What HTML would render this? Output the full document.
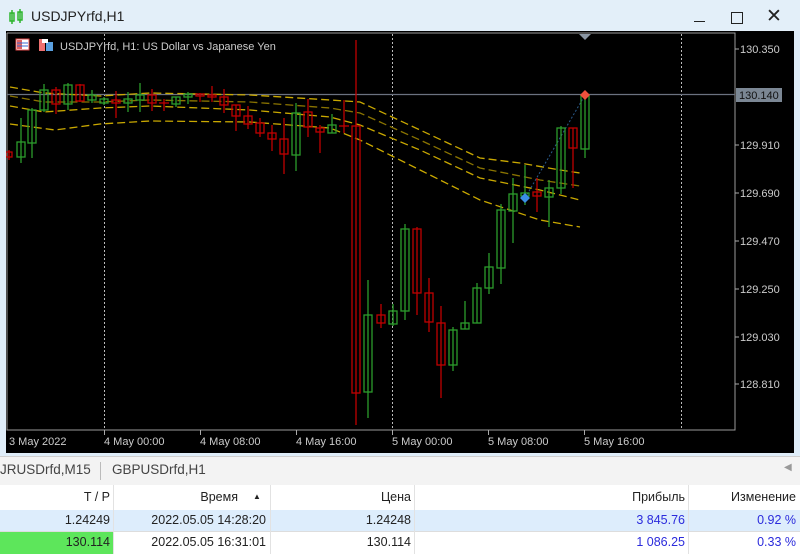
<!DOCTYPE html>
<html><head><meta charset="utf-8"><style>
body{margin:0;width:800px;height:554px;overflow:hidden;background:#dfedf9;font-family:"Liberation Sans",sans-serif;position:relative}
.t{position:absolute;white-space:nowrap}
#tb{position:absolute;left:0;top:0;width:800px;height:31px;background:#e3eff9}
#tabs{position:absolute;left:0;top:456px;width:800px;height:28px;background:#f3f3f3;border-top:1px solid #d0d0d0;border-bottom:1px solid #d6d6d6}
#tbl{position:absolute;left:0;top:485px;width:800px;height:69px;background:#fff}
.c{position:absolute;font-size:12.5px;color:#222;text-align:right;height:21px;line-height:21px}
.v{position:absolute;width:1px;background:#e2e2e2}
</style></head><body>
<div id="tb"></div>
<svg class="t" style="left:9px;top:9px" width="14" height="16"><rect x="1" y="4" width="4" height="8" fill="none" stroke="#2db52d" stroke-width="1.5"/><line x1="3" y1="1" x2="3" y2="15" stroke="#2db52d" stroke-width="1.5"/><rect x="9" y="3" width="4" height="8" fill="none" stroke="#2db52d" stroke-width="1.5"/><line x1="11" y1="0" x2="11" y2="14" stroke="#2db52d" stroke-width="1.5"/></svg>
<div class="t" style="left:31px;top:8px;font-size:14px;color:#222">USDJPYrfd,H1</div>
<div class="t" style="left:694px;top:21px;width:11px;height:1px;background:#222"></div>
<div class="t" style="left:731px;top:12px;width:10px;height:10px;border:1.3px solid #222"></div>
<div class="t" style="left:766px;top:5px;font-size:19px;color:#222">✕</div>
<svg class="t" style="left:6px;top:31px" width="788" height="422">
<rect width="788" height="422" fill="#000"/>
<g transform="translate(-6,-31)">
<polyline points="7,33 735,33 735,430 7,430 7,33" fill="none" stroke="#9a9a9a" stroke-width="1"/>
<g stroke="#bbb" stroke-dasharray="2,2" stroke-width="1"><line x1="104.5" y1="34" x2="104.5" y2="430"/><line x1="392.5" y1="34" x2="392.5" y2="430"/><line x1="681.5" y1="34" x2="681.5" y2="430"/></g>
<line x1="7" y1="94.5" x2="735" y2="94.5" stroke="#6b7280" stroke-width="1.2"/>
<polygon points="579,34 591,34 585,40" fill="#8a96a3"/>
<g fill="none" stroke-dasharray="8,4" stroke-width="1.3">
<polyline stroke="#c9a800" points="10,87 44,93 100,96 150,93 250,95 330,100 360,102 420,130 480,158 520,163 560,170 580,173"/>
<polyline stroke="#8a7400" points="10,96 44,102 100,102 150,100 250,102 330,108 360,113 420,140 480,168 540,180 580,186"/>
<polyline stroke="#c9a800" points="10,106 44,112 100,108 150,106 250,110 330,117 360,125 420,150 480,178 540,190 580,200"/>
<polyline stroke="#c9a800" points="10,124 55,130 100,124 150,121 250,122 330,128 360,140 420,170 480,200 540,220 580,227"/>
</g>
<line x1="525" y1="198" x2="585" y2="95" stroke="#2a5a8a" stroke-dasharray="2,2"/>
<g stroke-width="1.3" fill="none">
<g stroke="#c00000"><line x1="9" y1="150" x2="9" y2="160"/><rect x="6" y="152" width="6" height="5"/></g>
<g stroke="#2c9c2c"><line x1="21" y1="118" x2="21" y2="163"/><rect x="17" y="142" width="8" height="15"/><line x1="32" y1="108" x2="32" y2="158"/><rect x="28" y="110" width="8" height="33"/><line x1="44" y1="84" x2="44" y2="112"/><rect x="40" y="90" width="8" height="20"/></g>
<g stroke="#c00000"><line x1="56" y1="87" x2="56" y2="114"/><rect x="52" y="90" width="8" height="14"/></g>
<g stroke="#2c9c2c"><line x1="68" y1="83" x2="68" y2="110"/><rect x="64" y="85" width="8" height="19"/></g>
<g stroke="#c00000"><line x1="80" y1="84" x2="80" y2="102"/><rect x="76" y="85" width="8" height="16"/></g>
<g stroke="#2c9c2c"><line x1="92" y1="90" x2="92" y2="103"/><rect x="88" y="95" width="8" height="5"/><line x1="104" y1="97" x2="104" y2="105"/><rect x="100" y="99" width="8" height="4"/></g>
<g stroke="#c00000"><line x1="116" y1="91" x2="116" y2="118"/><rect x="112" y="100" width="8" height="3"/></g>
<g stroke="#2c9c2c"><line x1="128" y1="92" x2="128" y2="112"/><rect x="124" y="99" width="8" height="4"/><line x1="140" y1="83" x2="140" y2="112"/><rect x="136" y="95" width="8" height="5"/></g>
<g stroke="#c00000"><line x1="152" y1="89" x2="152" y2="111"/><rect x="148" y="95" width="8" height="8"/><line x1="164" y1="99" x2="164" y2="111"/><line x1="159" y1="103" x2="169" y2="103"/></g>
<g stroke="#2c9c2c"><line x1="176" y1="97" x2="176" y2="107"/><rect x="172" y="97" width="8" height="7"/><line x1="188" y1="92" x2="188" y2="104"/><rect x="184" y="94" width="8" height="3"/></g>
<g stroke="#c00000"><line x1="200" y1="93" x2="200" y2="102"/><rect x="196" y="94" width="8" height="2"/><line x1="212" y1="86" x2="212" y2="102"/><rect x="208" y="95" width="8" height="2"/><line x1="224" y1="89" x2="224" y2="113"/><rect x="220" y="97" width="8" height="8"/><line x1="236" y1="105" x2="236" y2="131"/><rect x="232" y="105" width="8" height="11"/><line x1="248" y1="106" x2="248" y2="129"/><rect x="244" y="116" width="8" height="8"/><line x1="260" y1="118" x2="260" y2="137"/><rect x="256" y="123" width="8" height="10"/><line x1="272" y1="125" x2="272" y2="151"/><rect x="268" y="133" width="8" height="6"/><line x1="284" y1="118" x2="284" y2="174"/><rect x="280" y="139" width="8" height="15"/></g>
<g stroke="#2c9c2c"><line x1="296" y1="103" x2="296" y2="171"/><rect x="292" y="113" width="8" height="42"/></g>
<g stroke="#c00000"><line x1="308" y1="99" x2="308" y2="137"/><rect x="304" y="112" width="8" height="15"/><line x1="320" y1="125" x2="320" y2="153"/><rect x="316" y="128" width="8" height="4"/></g>
<g stroke="#2c9c2c"><line x1="332" y1="114" x2="332" y2="133"/><rect x="328" y="125" width="8" height="8"/></g>
<g stroke="#c00000"><line x1="344" y1="100" x2="344" y2="133"/><line x1="339" y1="126" x2="349" y2="126"/><line x1="356" y1="40" x2="356" y2="425"/><rect x="352" y="126" width="8" height="267"/></g>
<g stroke="#2c9c2c"><line x1="368" y1="280" x2="368" y2="418"/><rect x="364" y="315" width="8" height="77"/></g>
<g stroke="#c00000"><line x1="381" y1="304" x2="381" y2="328"/><rect x="377" y="315" width="8" height="8"/></g>
<g stroke="#2c9c2c"><line x1="393" y1="304" x2="393" y2="326"/><rect x="389" y="311" width="8" height="13"/><line x1="405" y1="224" x2="405" y2="320"/><rect x="401" y="229" width="8" height="82"/></g>
<g stroke="#c00000"><line x1="417" y1="227" x2="417" y2="315"/><rect x="413" y="229" width="8" height="64"/><line x1="429" y1="278" x2="429" y2="332"/><rect x="425" y="293" width="8" height="29"/><line x1="441" y1="306" x2="441" y2="398"/><rect x="437" y="323" width="8" height="42"/></g>
<g stroke="#2c9c2c"><line x1="453" y1="327" x2="453" y2="371"/><rect x="449" y="330" width="8" height="35"/><line x1="465" y1="301" x2="465" y2="329"/><rect x="461" y="323" width="8" height="6"/><line x1="477" y1="283" x2="477" y2="323"/><rect x="473" y="288" width="8" height="35"/><line x1="489" y1="253" x2="489" y2="294"/><rect x="485" y="267" width="8" height="21"/><line x1="501" y1="204" x2="501" y2="284"/><rect x="497" y="210" width="8" height="58"/><line x1="513" y1="178" x2="513" y2="243"/><rect x="509" y="194" width="8" height="17"/><line x1="525" y1="165" x2="525" y2="205"/><rect x="521" y="193" width="8" height="3"/></g>
<g stroke="#c00000"><line x1="537" y1="178" x2="537" y2="212"/><rect x="533" y="192" width="8" height="4"/></g>
<g stroke="#2c9c2c"><line x1="549" y1="180" x2="549" y2="227"/><rect x="545" y="188" width="8" height="9"/><line x1="561" y1="126" x2="561" y2="194"/><rect x="557" y="128" width="8" height="60"/></g>
<g stroke="#c00000"><line x1="573" y1="128" x2="573" y2="188"/><rect x="569" y="128" width="8" height="20"/></g>
<g stroke="#2c9c2c"><line x1="585" y1="95" x2="585" y2="158"/><rect x="581" y="95" width="8" height="54"/></g>
</g>
<polygon points="525,193 530,198 525,203 520,198" fill="#3a8ee6"/>
<polygon points="585,90 590,95 585,100 580,95" fill="#f0503c"/>
<rect x="736" y="88" width="46" height="14" fill="#7b8794"/>
<g fill="#ccc" font-size="11" font-family="Liberation Sans"><g stroke="#aaa">
<line x1="735" y1="49" x2="739" y2="49"/><line x1="735" y1="145" x2="739" y2="145"/><line x1="735" y1="193" x2="739" y2="193"/><line x1="735" y1="241" x2="739" y2="241"/><line x1="735" y1="289" x2="739" y2="289"/><line x1="735" y1="337" x2="739" y2="337"/><line x1="735" y1="384" x2="739" y2="384"/></g>
<text x="740" y="53">130.350</text><text x="739" y="99" fill="#111">130.140</text><text x="740" y="149">129.910</text><text x="740" y="197">129.690</text><text x="740" y="245">129.470</text><text x="740" y="293">129.250</text><text x="740" y="341">129.030</text><text x="740" y="388">128.810</text>
<g stroke="#aaa"><line x1="104.5" y1="430" x2="104.5" y2="435"/><line x1="200.5" y1="430" x2="200.5" y2="435"/><line x1="296.5" y1="430" x2="296.5" y2="435"/><line x1="392.5" y1="430" x2="392.5" y2="435"/><line x1="488.5" y1="430" x2="488.5" y2="435"/><line x1="584.5" y1="430" x2="584.5" y2="435"/></g>
<text x="9" y="445">3 May 2022</text><text x="104" y="445">4 May 00:00</text><text x="200" y="445">4 May 08:00</text><text x="296" y="445">4 May 16:00</text><text x="392" y="445">5 May 00:00</text><text x="488" y="445">5 May 08:00</text><text x="584" y="445">5 May 16:00</text>
<text x="60" y="50" font-size="11">USDJPYrfd, H1:  US Dollar vs Japanese Yen</text>
</g>
<g><rect x="16" y="39" width="13" height="11" fill="#fff" stroke="#e04848"/><rect x="17" y="40" width="5" height="9" fill="#e06060"/><line x1="17" y1="43" x2="28" y2="43" stroke="#3a6ad0"/><line x1="17" y1="46" x2="28" y2="46" stroke="#3a6ad0"/>
<rect x="39" y="39" width="6" height="12" fill="#f07070"/><rect x="46" y="42" width="7" height="9" fill="#5aa0e0"/><rect x="42" y="39" width="6" height="4" fill="#fff"/></g>
</g></svg>
<div id="tabs"></div>
<div class="t" style="left:0;top:462px;font-size:13.5px;color:#444">JRUSDrfd,M15</div>
<div class="t" style="left:100px;top:462px;width:1px;height:18px;background:#bbb"></div>
<div class="t" style="left:112px;top:462px;font-size:13.5px;color:#444">GBPUSDrfd,H1</div>
<div class="t" style="left:784px;top:462px;font-size:10px;color:#999">◀</div>
<div id="tbl"></div>
<div class="t" style="left:0;top:510px;width:800px;height:21px;background:#ddedfc"></div>
<div class="t" style="left:0;top:531px;width:800px;height:1px;background:#ddd"></div>
<div class="t" style="left:0;top:532px;width:113px;height:22px;background:#5de65b"></div>
<div class="v" style="left:113px;top:485px;height:69px"></div>
<div class="v" style="left:270px;top:485px;height:69px"></div>
<div class="v" style="left:414px;top:485px;height:69px"></div>
<div class="v" style="left:688px;top:485px;height:69px"></div>
<div class="c" style="left:0;width:110px;top:487px">T / P</div>
<div class="c" style="left:0;width:238px;top:487px">Время</div>
<div class="t" style="left:253px;top:492px;font-size:8px;color:#222">▲</div>
<div class="c" style="left:0;width:411px;top:487px">Цена</div>
<div class="c" style="left:0;width:685px;top:487px">Прибыль</div>
<div class="c" style="left:0;width:796px;top:487px">Изменение</div>
<div class="c" style="left:0;width:110px;top:510px">1.24249</div>
<div class="c" style="left:0;width:266px;top:510px">2022.05.05 14:28:20</div>
<div class="c" style="left:0;width:411px;top:510px">1.24248</div>
<div class="c" style="left:0;width:685px;top:510px;color:#2b2bdc">3 845.76</div>
<div class="c" style="left:0;width:796px;top:510px;color:#2b2bdc">0.92 %</div>
<div class="c" style="left:0;width:110px;top:532px">130.114</div>
<div class="c" style="left:0;width:266px;top:532px">2022.05.05 16:31:01</div>
<div class="c" style="left:0;width:411px;top:532px">130.114</div>
<div class="c" style="left:0;width:685px;top:532px;color:#2b2bdc">1 086.25</div>
<div class="c" style="left:0;width:796px;top:532px;color:#2b2bdc">0.33 %</div>
</body></html>
